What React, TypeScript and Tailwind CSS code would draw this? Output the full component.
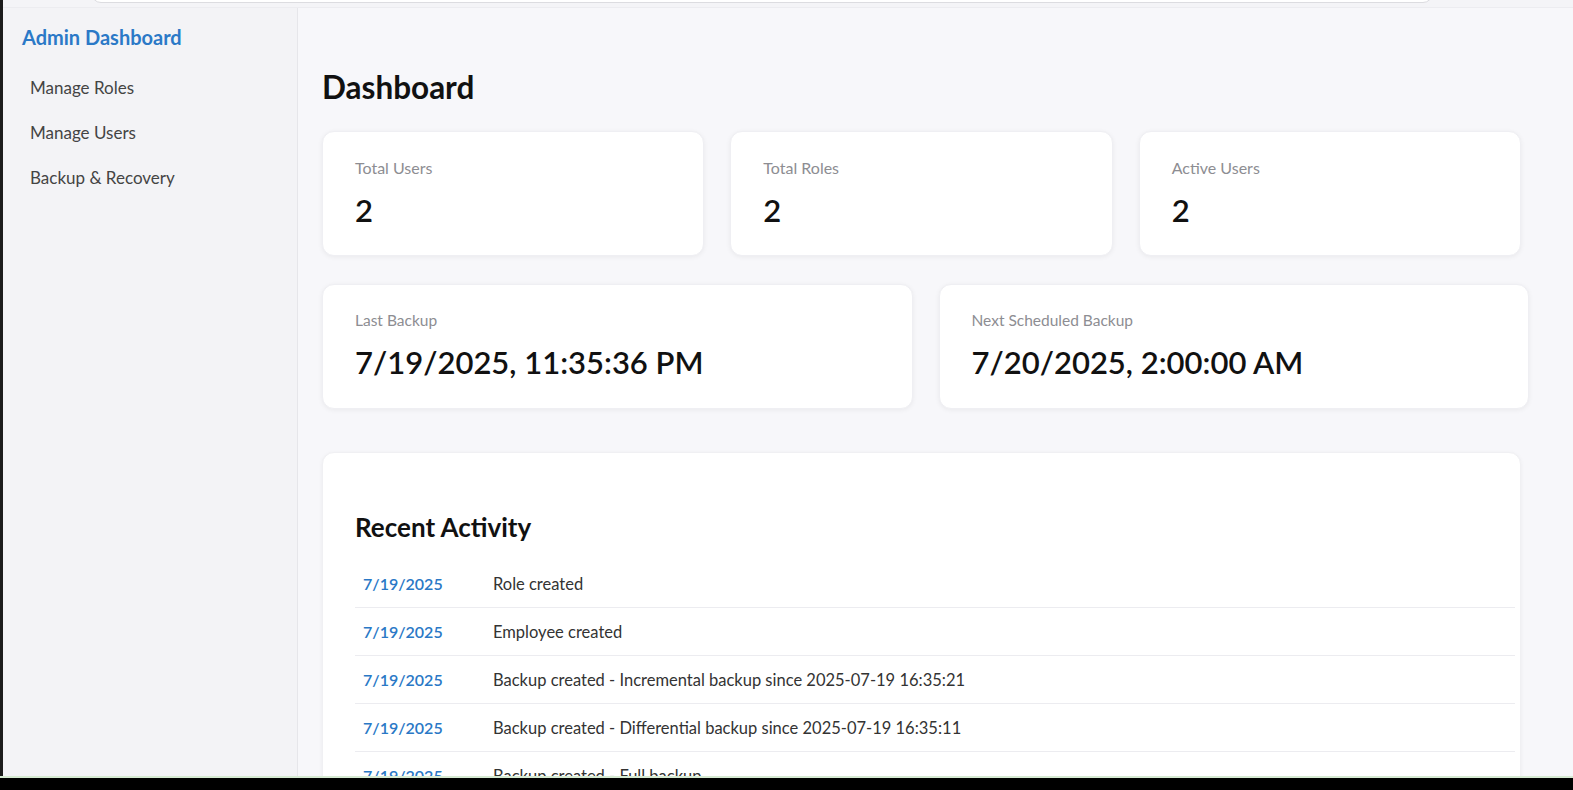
import React from "react";

const activity = [
  { date: "7/19/2025", text: "Role created" },
  { date: "7/19/2025", text: "Employee created" },
  { date: "7/19/2025", text: "Backup created - Incremental backup since 2025-07-19 16:35:21" },
  { date: "7/19/2025", text: "Backup created - Differential backup since 2025-07-19 16:35:11" },
  { date: "7/19/2025", text: "Backup created - Full backup" },
];

function StatCard({ label, value }: { label: string; value: string }) {
  return (
    <div className="h-[125px] rounded-[12px] bg-white shadow-[0_1px_5px_rgba(0,0,0,0.06)] border border-[#efeff3] px-[32px] pt-[25px] flex flex-col">
      <div className="text-[16px] leading-[22px] text-[#8d8d92]">{label}</div>
      <div className="mt-[11px] text-[31px] leading-[40px] font-semibold text-[#111]">{value}</div>
    </div>
  );
}

function WideCard({ label, value }: { label: string; value: string }) {
  return (
    <div className="h-[125px] rounded-[12px] bg-white shadow-[0_1px_5px_rgba(0,0,0,0.06)] border border-[#efeff3] px-[32px] pt-[24px] flex flex-col">
      <div className="text-[15.5px] leading-[22px] text-[#8d8d92]">{label}</div>
      <div className="mt-[9px] text-[31px] leading-[44px] font-semibold text-[#111]">{value}</div>
    </div>
  );
}

export default function App() {
  return (
    <div
      className="w-[1573px] h-[790px] bg-black flex flex-col overflow-hidden"
      style={{ fontFamily: '"Segoe UI", Lato, "Noto Sans", sans-serif' }}
    >
      <div className="flex-1 flex min-h-0">
        <div className="w-[3px] bg-[#1c1c1c]" />
        <div className="flex-1 flex flex-col min-w-0 bg-[#f4f4f7]">
          <div className="h-[8px] relative border-b border-[#ececf0]">
            <div className="absolute left-[88px] w-[1342px] top-[-10px] h-[13px] bg-white rounded-b-[10px] border border-[#dcdce0]" />
          </div>
          <div className="flex-1 flex min-h-0">
            <aside className="w-[295px] bg-[#f3f3f6] border-r border-[#e6e6ea] rounded-tl-[10px] rounded-bl-[10px] pt-[16px]">
              <div className="pl-[19px] text-[20px] leading-[26px] font-bold text-[#2b79c7]">Admin Dashboard</div>
              <nav className="mt-[15px] flex flex-col pl-[27px]">
                {["Manage Roles", "Manage Users", "Backup & Recovery"].map((n) => (
                  <div key={n} className="h-[45px] flex items-center text-[17px] text-[#444]">
                    {n}
                  </div>
                ))}
              </nav>
            </aside>
            <main className="flex-1 bg-[#f7f7fa] pl-[24px] pr-[48px] pt-[59px] overflow-hidden">
              <h1 className="text-[31.5px] leading-[40px] font-bold text-[#111]">Dashboard</h1>
              <div className="mt-[24px] grid grid-cols-3 gap-[26px] w-[1199px]">
                <StatCard label="Total Users" value="2" />
                <StatCard label="Total Roles" value="2" />
                <StatCard label="Active Users" value="2" />
              </div>
              <div className="mt-[28px] grid grid-cols-2 gap-[26px] w-[1207px]">
                <WideCard label="Last Backup" value="7/19/2025, 11:35:36 PM" />
                <WideCard label="Next Scheduled Backup" value="7/20/2025, 2:00:00 AM" />
              </div>
              <div className="mt-[43px] w-[1199px] rounded-t-[12px] bg-white shadow-[0_1px_4px_rgba(0,0,0,0.05)] border border-[#f0f0f3] pl-[32px] pr-[5px] pt-[58px] h-[400px]">
                <h2 className="text-[26px] leading-[32px] font-bold text-[#111]">Recent Activity</h2>
                <div className="mt-[17px]">
                  {activity.map((a, i) => (
                    <div key={i} className="h-[48px] flex items-center border-b border-[#ececf0]">
                      <div className="w-[130px] px-[8px] text-[16px] leading-[24px] font-semibold text-[#2a78c6]">{a.date}</div>
                      <div className="px-[8px] text-[16.5px] leading-[24px] pt-[1px] text-[#333]">{a.text}</div>
                    </div>
                  ))}
                </div>
              </div>
            </main>
          </div>
        </div>
      </div>
      <div className="h-[2px] bg-[#d6ead2]" />
      <div className="h-[12px] bg-black" />
    </div>
  );
}
